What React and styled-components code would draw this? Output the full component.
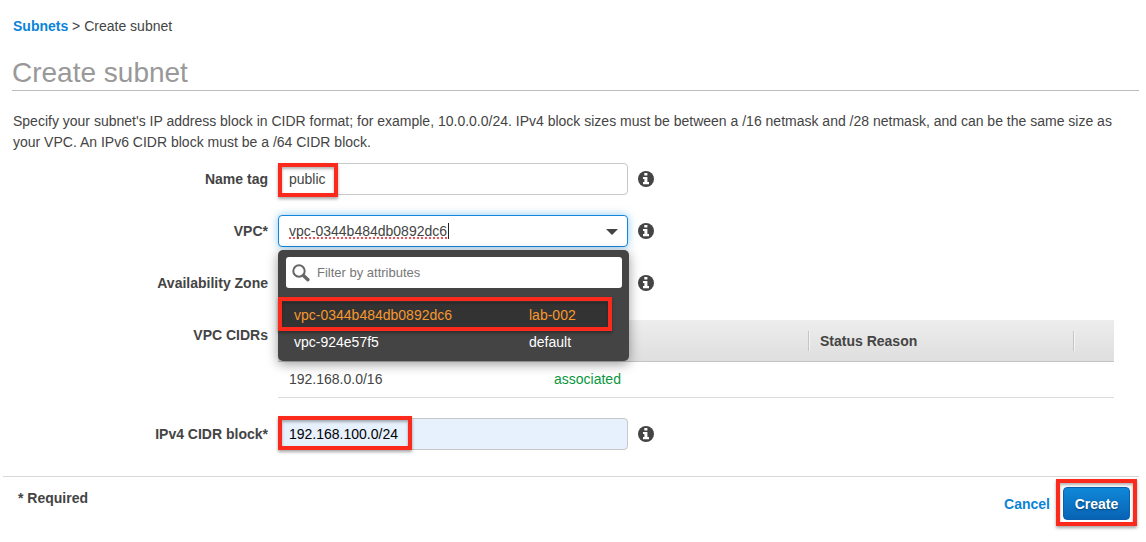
import React from "react";
import styled, { createGlobalStyle, css } from "styled-components";

const GlobalStyle = createGlobalStyle`
  * { box-sizing: border-box; }
  body {
    margin: 0;
    background: #fff;
    color: #444;
    font: 14px/20px "Liberation Sans", Arial, sans-serif;
  }
  button, input, select { font: inherit; color: inherit; }
`;

const Page = styled.main`
  padding: 16px 7px 20px 3px;
`;

const Content = styled.div`
  padding-left: 9px;
`;

const Breadcrumb = styled.nav`
  padding-left: 1px;
`;

const Link = styled.a`
  color: #0a84d8;
  font-weight: bold;
  text-decoration: none;
`;

const Title = styled.h1`
  margin: 20px 0 0;
  border-bottom: 1px solid #bbb;
  color: #999;
  font-size: 28px;
  line-height: 34px;
  font-weight: normal;
`;

const Intro = styled.p`
  margin: 20px 0 0;
  padding-left: 1px;
  line-height: 21px;
`;

const Form = styled.form`
  padding-top: 10px;
`;

const Row = styled.div`
  display: grid;
  grid-template-columns: 256px minmax(0, 1fr);
  column-gap: 10px;
  margin-bottom: 20px;
`;

const labelText = css`
  font-weight: bold;
  line-height: 32px;
  text-align: right;
`;

const Label = styled.label`
  ${labelText}
`;

const Caption = styled.span`
  ${labelText}
`;

const Control = styled.div`
  display: flex;
  align-items: center;
  gap: 10px;
`;

const Field = styled.div`
  position: relative;
  flex: 0 1 350px;
  height: 32px;
`;

const TextInput = styled.input`
  display: block;
  width: 100%;
  height: 32px;
  padding: 0 10px;
  border: 1px solid ${(p) => (p.$active ? "#1186dc" : "#c8c8c8")};
  border-radius: 4px;
  outline: none;
  background: ${(p) => (p.$filled ? "#e7f0fd" : "#fff")};
  color: ${(p) => (p.$filled ? "#000" : "#444")};
  box-shadow: ${(p) => (p.$active ? "0 0 8px rgba(0, 136, 220, 0.45)" : "none")};
  ${(p) =>
    p.$active &&
    css`
      text-decoration: underline dotted #f2505a 2px;
      text-underline-offset: 1px;
      text-decoration-skip-ink: none;
    `}
`;

const Caret = styled.span`
  position: absolute;
  left: 170px;
  top: 8px;
  width: 1px;
  height: 16px;
  background: #222;
`;

const Arrow = styled.span`
  position: absolute;
  right: 10px;
  top: 14px;
  border: 6px solid transparent;
  border-top-color: #444;
  border-bottom: 0;
`;

const Marker = styled.span`
  position: absolute;
  z-index: 3;
  top: ${(p) => p.$top || 0}px;
  left: ${(p) => p.$left || 0}px;
  width: ${(p) => p.$width}px;
  height: ${(p) => p.$height || 34}px;
  border: 4px solid #fb2a1c;
  box-shadow: 0 2px 3px rgba(0, 0, 0, 0.35), inset 0 2px 3px rgba(0, 0, 0, 0.3);
  pointer-events: none;
`;

const InfoButton = styled.button`
  display: flex;
  padding: 0;
  border: 0;
  background: none;
`;

const Menu = styled.div`
  position: absolute;
  z-index: 2;
  top: 35px;
  left: 0;
  width: calc(100% + 1px);
  padding: 7px 7px 5px 8px;
  border-radius: 5px;
  background: #444;
  box-shadow: 0 3px 12px rgba(0, 0, 0, 0.4);
`;

const Filter = styled.label`
  display: flex;
  align-items: center;
  gap: 7px;
  height: 31px;
  padding: 0 6px;
  border-radius: 3px;
  background: #fff;
`;

const FilterInput = styled.input`
  flex: 1;
  min-width: 0;
  padding: 0;
  border: 0;
  outline: none;
  background: none;
  font-size: 13px;
  &::placeholder { color: #777; opacity: 1; }
`;

const Options = styled.ul`
  list-style: none;
  margin: 14px 10px 0 -4px;
  padding: 0;
`;

const Option = styled.li`
  display: grid;
  grid-template-columns: 235px 1fr;
  padding-left: 12px;
  line-height: 27px;
  color: ${(p) => (p.$selected ? "#f7982f" : "#fff")};
  background: ${(p) => (p.$selected ? "#333" : "transparent")};
`;

const CidrTable = styled.table`
  width: calc(100% - 25px);
  margin-top: 1px;
  border-collapse: separate;
  border-spacing: 0;
  table-layout: fixed;
`;

const HeadRow = styled.tr`
  background: linear-gradient(#ededed, #dedede);
`;

const HeadCell = styled.th`
  width: ${(p) => (p.$last ? "41px" : "calc((100% - 41px) / 3)")};
  height: 42px;
  padding: 0;
  border-bottom: 1px solid #c4c4c4;
  text-align: left;
`;

const HeadLabel = styled.div`
  height: 20px;
  padding-left: 11px;
  border-left: 1px solid ${(p) => (p.$first ? "transparent" : "#c4c4c4")};
  box-shadow: ${(p) => (p.$first ? "none" : "inset 1px 0 #f5f5f5")};
`;

const Cell = styled.td`
  height: 36px;
  padding: 0 11px 2px;
  border-bottom: 1px solid #ddd;
  color: ${(p) => (p.$ok ? "#0a963c" : "#444")};
`;

const Footer = styled.footer`
  display: flex;
  justify-content: space-between;
  margin-top: 26px;
  padding: 10px 9px 0 15px;
  border-top: 1px solid #d8d8d8;
`;

const Required = styled.strong`
  padding-top: 1px;
`;

const Actions = styled.div`
  display: flex;
  align-items: center;
  gap: 13px;
`;

const ButtonFrame = styled.div`
  position: relative;
`;

const CreateButton = styled.button`
  display: block;
  min-width: 67px;
  height: 33px;
  padding: 0 10px;
  border: 1px solid #0b5fae;
  border-radius: 4px;
  background: linear-gradient(#1088d8, #0763b4);
  color: #fff;
  font-weight: bold;
  text-shadow: 0 1px 2px rgba(0, 0, 0, 0.45);
`;

function Info({ topic }) {
  return (
    <InfoButton type="button" aria-label={`About ${topic}`}>
      <svg width="16" height="16" viewBox="0 0 16 16" aria-hidden="true">
        <circle cx="8" cy="8" r="8" fill="#444" />
        <path
          fill="#fff"
          d="M6.3 2h3.1v2.6H6.3zM5 6h4.4v5.1H11v2.2H5v-2.2h1.4V8.1H5z"
        />
      </svg>
    </InfoButton>
  );
}

function SearchIcon() {
  return (
    <svg width="18" height="18" viewBox="0 0 18 18" fill="none" aria-hidden="true">
      <circle cx="7" cy="7" r="5.7" stroke="#666" strokeWidth="2" />
      <path d="M11.7 11.7l4.2 4" stroke="#666" strokeWidth="3.4" strokeLinecap="round" />
    </svg>
  );
}

const vpcs = [
  { id: "vpc-0344b484db0892dc6", name: "lab-002", selected: true },
  { id: "vpc-924e57f5", name: "default", selected: false },
];

export default function App() {
  return (
    <>
      <GlobalStyle />
      <Page>
        <Content>
          <Breadcrumb>
            <Link href="#subnets">Subnets</Link> &gt; Create subnet
          </Breadcrumb>
          <Title>Create subnet</Title>
          <Intro>
            Specify your subnet's IP address block in CIDR format; for example, 10.0.0.0/24. IPv4
            block sizes must be between a /16 netmask and /28 netmask, and can be the same size as
            your VPC. An IPv6 CIDR block must be a /64 CIDR block.
          </Intro>

          <Form id="subnet" onSubmit={(e) => e.preventDefault()}>
            <Row>
              <Label htmlFor="name">Name tag</Label>
              <Control>
                <Field>
                  <TextInput id="name" defaultValue="public" />
                  <Marker $width={60} />
                </Field>
                <Info topic="Name tag" />
              </Control>
            </Row>

            <Row>
              <Label htmlFor="vpc">VPC*</Label>
              <Control>
                <Field>
                  <TextInput id="vpc" $active spellCheck={false} defaultValue="vpc-0344b484db0892dc6" />
                  <Caret />
                  <Arrow />
                  <Menu>
                    <Filter>
                      <SearchIcon />
                      <FilterInput aria-label="Filter" placeholder="Filter by attributes" />
                    </Filter>
                    <Options role="listbox" aria-label="VPC">
                      {vpcs.map((v) => (
                        <Option key={v.id} role="option" aria-selected={v.selected} $selected={v.selected}>
                          <span>{v.id}</span>
                          <span>{v.name}</span>
                        </Option>
                      ))}
                    </Options>
                    <Marker $top={47} $width={334} />
                  </Menu>
                </Field>
                <Info topic="VPC" />
              </Control>
            </Row>

            <Row>
              <Label htmlFor="zone">Availability Zone</Label>
              <Control>
                <Field>
                  <TextInput id="zone" />
                </Field>
                <Info topic="Availability Zone" />
              </Control>
            </Row>

            <Row>
              <Caption id="cidrs">VPC CIDRs</Caption>
              <CidrTable aria-labelledby="cidrs">
                <thead>
                  <HeadRow>
                    <HeadCell aria-label="CIDR"><HeadLabel $first /></HeadCell>
                    <HeadCell aria-label="Status"><HeadLabel /></HeadCell>
                    <HeadCell><HeadLabel>Status Reason</HeadLabel></HeadCell>
                    <HeadCell $last><HeadLabel /></HeadCell>
                  </HeadRow>
                </thead>
                <tbody>
                  <tr>
                    <Cell>192.168.0.0/16</Cell>
                    <Cell $ok>associated</Cell>
                    <Cell />
                    <Cell />
                  </tr>
                </tbody>
              </CidrTable>
            </Row>

            <Row>
              <Label htmlFor="cidr">IPv4 CIDR block*</Label>
              <Control>
                <Field>
                  <TextInput id="cidr" $filled defaultValue="192.168.100.0/24" />
                  <Marker $top={-2} $width={134} />
                </Field>
                <Info topic="IPv4 CIDR block" />
              </Control>
            </Row>
          </Form>
        </Content>

        <Footer>
          <Required>* Required</Required>
          <Actions>
            <Link href="#cancel">Cancel</Link>
            <ButtonFrame>
              <CreateButton type="submit" form="subnet">Create</CreateButton>
              <Marker $top={-8} $left={-7} $width={81} $height={47} />
            </ButtonFrame>
          </Actions>
        </Footer>
      </Page>
    </>
  );
}
